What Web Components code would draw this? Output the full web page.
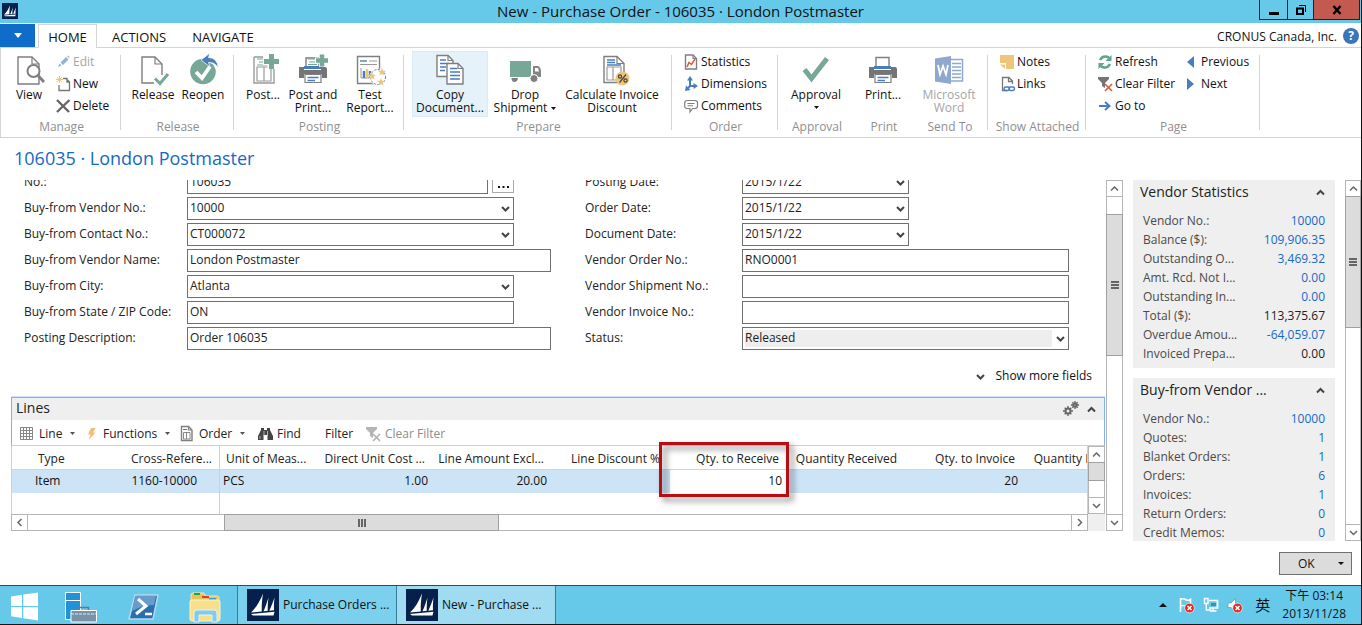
<!DOCTYPE html>
<html lang="en">
<head>
<meta charset="utf-8">
<title>New - Purchase Order - 106035 · London Postmaster</title>
<style>
html, body { margin: 0; height: 100%; }
body { font: 12px/16px "Open Sans", "Noto Sans", "Noto Sans CJK TC", sans-serif; color: #222; background: #fff; overflow: hidden; }
</style>
</head>
<body>
<purchase-order-app></purchase-order-app>
<script>
const BASE = `
  *, *::before, *::after { box-sizing: border-box; }
  button, input, select { font: inherit; color: inherit; margin: 0; padding: 0; border: 0; background: none; border-radius: 0; }
  button { display: block; cursor: default; }
  svg { display: block; }
`;
function define(name, render) {
  customElements.define(name, class extends HTMLElement {
    connectedCallback() {
      if (this.shadowRoot) return;
      const t = document.createElement('template');
      t.innerHTML = render(this);
      this.attachShadow({ mode: 'open' }).append(t.content.cloneNode(true));
      const s = document.createElement('style');
      s.textContent = BASE;
      this.shadowRoot.prepend(s);
    }
  });
}
const G = '#7f7f7f', GR = '#76a797', BL = '#4a7ebb', YE = '#efc57b', RD = '#d95b3b';
const page = (x, y, w, h, f) => `<path d="M${x} ${y}H${x + w - f}L${x + w} ${y + f}V${y + h}H${x}Z" fill="#fff" stroke="${G}" stroke-width="1.4"/><path d="M${x + w - f} ${y}V${y + f}H${x + w}" fill="none" stroke="${G}" stroke-width="1.2"/>`;
const printer = `<path d="M9 12V3.500H22V12" fill="#fff" stroke="${G}" stroke-width="1.400"/><path d="M7 12H24V15H7Z" fill="${BL}"/><path d="M2 13H7V16H24V13H28Q30 13 30 15V24H25V20H7V24H2Z" fill="#757575"/><path d="M8 20.500H24V28.500H8Z" fill="#fff" stroke="${G}" stroke-width="1.200"/><path d="M10.500 23.500H21.500M10.500 26.500H18" stroke="${BL}" stroke-width="1.300"/>`;
const badge = (x, y) => `<circle cx="${x}" cy="${y}" r="4.800" fill="#e02b20" stroke="#fff" stroke-width=".6"/><path d="M${x - 2} ${y - 2}l4 4m0 -4l-4 4" stroke="#fff" stroke-width="1.500"/>`;
const star = (x, y) => `<path transform="translate(${x} ${y})" d="M0 -4L1.200 -1.300L4 -1.200L1.800 .7L2.600 3.500L0 1.900L-2.600 3.500L-1.800 .7L-4 -1.200L-1.200 -1.300Z" fill="${YE}"/>`;
const cog = (x, y, r) => `<g transform="translate(${x} ${y})" fill="none" stroke="#666"><circle r="${r}" stroke-width="2"/><path d="M${r} 0h2.500M-${r} 0h-2.500M0 ${r}v2.500M0 -${r}v-2.500M${r * .7} ${r * .7}l1.600 1.600M-${r * .7} ${r * .7}l-1.600 1.600M${r * .7} -${r * .7}l1.600 -1.600M-${r * .7} -${r * .7}l-1.600 -1.600" stroke-width="1.400"/></g>`;
const sails = '<rect width="32" height="32" fill="#05204b"/><path d="M4 23.500C9 19 13 12 16 4.500C15 11 14.500 17 14.800 22.500ZM16.500 22.300C18.500 18 20 13 21.500 8.500C20.800 13 20.600 18 20.800 21.800ZM22.300 21.700C24.500 17 26 13 27.500 8.500C27 13 26.800 17 27 21.300ZM4 25L27.500 22.800L26.500 26.500H6Z" fill="#fff"/>';
const bigIcons = {
  view: page(5, 3, 21, 27, 7) + `<circle cx="20.500" cy="17" r="6" fill="#fff" stroke="${G}" stroke-width="2"/><path d="M25 21.500L31 28" stroke="${G}" stroke-width="2.800"/>`,
  release: page(5, 3, 20, 26, 7) + `<path d="M17 21H31V30H17Z" fill="#fff"/><path d="M18 24.500L23 29.500L31 20" fill="none" stroke="${GR}" stroke-width="3"/>`,
  reopen: `<circle cx="16" cy="17.500" r="12.800" fill="${GR}"/><path d="M9 18L15 24L23 12.500" fill="none" stroke="#fff" stroke-width="3.800"/><path d="M31 14Q29 5 20 5.500" fill="none" stroke="#fff" stroke-width="6"/><path d="M14 6L23 -1L21.500 3.500Q31 4 31 14Q28 8 21.500 8.500L23 13Z" fill="${BL}" stroke="#fff" stroke-width=".7"/>`,
  post: `<path d="M7 3H16M27 15V29H7V3" fill="none" stroke="#999" stroke-width="1.400"/><path d="M10 5h9M12 8h7M10 11h10" stroke="${GR}" stroke-width="1.200"/><path d="M10 13H24V27H10ZM17 13V27" fill="none" stroke="#999" stroke-width="1.200"/><path d="M16 7.500H32M24 0V15" stroke="#fff" stroke-width="7"/><path d="M17 7.500H32M24.500 0V15" stroke="${GR}" stroke-width="5"/>`,
  postprint: printer.replace('V3.500', 'V4') + `<path d="M11 5h8M12 8h6M11 10.500h9" stroke="${GR}"/><path d="M18 6.500H31M25 0V13" stroke="#fff" stroke-width="6"/><path d="M19 6.500H31M25 .5V12.500" stroke="${GR}" stroke-width="4.500"/>`,
  test: `<path d="M3.500 2.500H25.500V29.500H3.500Z" fill="#fff" stroke="${G}" stroke-width="1.400"/><path d="M6 7H13" stroke="${BL}" stroke-width="1.400"/><path d="M6 10.500H23M15 7H23" stroke="#999"/><path d="M7 14V24H24" fill="none" stroke="#999"/><path d="M10 17V24M16 17V24" stroke="${BL}" stroke-width="2.500"/><path d="M13 15V24" stroke="${YE}" stroke-width="2.500"/><circle cx="24" cy="23" r="8.500" fill="#fff"/><circle cx="24" cy="23" r="7.500" fill="none" stroke="${BL}" stroke-dasharray="2 1.500"/>${star(18, 22)}${star(28, 18)}${star(27, 28)}`,
  copy: page(3, 1.500, 16, 21, 5) + `<path d="M6 6h6M6 9.500h9M6 13h6M6 16.500h5" stroke="${BL}" stroke-width="1.300"/>` + page(13, 9.500, 16, 20.500, 5) + `<path d="M16 14.500h7M16 18h10M16 21.500h10M16 25h10" stroke="${BL}" stroke-width="1.300"/>`,
  truck: `<path d="M1 7H22V23H1Z" fill="${GR}"/><path d="M24 12H29Q32 13 32 18V23H24Z" fill="#858585"/><path d="M26 14H29L30 17.500H26Z" fill="#fff"/><path d="M2.500 24H9Q8.500 28 5.500 28T2.500 24Z" fill="${G}"/><circle cx="25" cy="24.500" r="4" fill="${G}" stroke="#fff"/>`,
  invoice: '<g transform="translate(3 0)">' + page(5, 2.500, 20, 26, 7) + `<path d="M8 6h8M8 8.500h8M8 11h14" stroke="${BL}" stroke-width="1.300"/><path d="M8 13H22V26H8ZM14 13V26" fill="none" stroke="#999" stroke-width="1.200"/><circle cx="23.500" cy="24.500" r="7" fill="${YE}"/><path d="M27 20.500L20.500 28.500" stroke="#444" stroke-width="1.200"/><g fill="none" stroke="#444" stroke-width="1.200"><circle cx="21" cy="22.500" r="1.600"/><circle cx="26.500" cy="26.500" r="1.600"/></g></g>`,
  check: `<path d="M4.500 15.500L11.500 24.500L27 4.500" fill="none" stroke="${GR}" stroke-width="5"/>`,
  printer,
  word: `<path d="M17 5.500H29.500V27H17Z" fill="#fff" stroke="#8fa8d0" stroke-width="1.500"/><path d="M19 9.500H28M19 13H28M19 16.500H28M19 20H28M19 23.500H28" stroke="#8fa8d0" stroke-width="1.500"/><path d="M2 4.500L18 2V30L2 27.500Z" fill="#8fa8d0"/><path d="M5 11L7 20.500L10 12L13 20.500L15 11" fill="none" stroke="#fff" stroke-width="1.800"/>`,
  sails,
  start: '<path d="M0 5.500L11 3.700V15H0ZM12.300 3.500L27 1.500V15H12.300ZM0 16.300H11V27L0 25.300ZM12.300 16.300H27V29.500L12.300 27.300Z" fill="#fff" transform="translate(8 0)"/>',
  server: '<path d="M.5 1.500H15.500V28.500H.5Z" fill="#2191d9" stroke="#fff"/><path d="M.5 9.500H15.500" stroke="#fff"/><path d="M6 19.500H31.500V31H6Z" fill="#7992a8" stroke="#fff"/><path d="M14 19V16.500H23.500V19" fill="none" stroke="#617b92" stroke-width="1.500"/><path d="M6 23H31" stroke="#dbe8f0" stroke-dasharray="3 1"/>',
  shell: '<path d="M8 4H31L26 28H2Z" fill="#2b6fae" stroke="#b9d9ee" stroke-width="1.500" stroke-linejoin="round"/><path d="M8 5H29L27 14Q16 14 5 20Z" fill="#659ccb"/><path d="M11 8L19 15L9 23" fill="none" stroke="#fff" stroke-width="3"/><path d="M18 23H25" stroke="#fff" stroke-width="2.500"/>',
  folder: '<path d="M2 4Q2 2 4 2H15L17 5H28Q30 5 30 7V28H2Z" fill="#e5c25e" stroke="#fbe9a8"/><path d="M5 3h6" stroke="#29a329" stroke-width="2"/><path d="M13 6h7" stroke="#d6402c" stroke-width="2"/><path d="M20 8h7" stroke="#3a9fe0" stroke-width="2"/><path d="M1 11Q1 9 3 9H29Q31 9 31 11V28Q31 30 29 30H3Q1 30 1 28Z" fill="#f8df8c" stroke="#fff3c4"/><path d="M5 31V22Q5 19 8 19H25Q28 19 28 22V31H23V24H10V31Z" fill="#83cbe9" stroke="#dff4fc"/>'
};
const smallIcons = {
  edit: '<path d="M2 13L3.500 9.500L5.500 11.500ZM4.500 8.500L10 3L12.500 5.500L7 11Z" fill="#8fb3d9"/><path d="M10.800 2L12 1.500L13.500 3L13 4.500Z" fill="#b8b8b8"/>',
  new: `<path d="M8 2.500H12V6H14.500V14.500H4V9M10.500 2L14.500 6" fill="none" stroke="#777" stroke-width="1.300" transform="translate(-1 0)"/><path d="M3.500 0V7M0 3.500H7M1 1L6 6M6 1L1 6" stroke="${YE}"/>`,
  delete: '<path d="M1 2L13 14M13.500 2L1 14" stroke="#666" stroke-width="2.400"/>',
  stats: page(1.500, 1, 11, 14, 3.500) + `<path d="M3 13L5 8.500L7.500 10.500L11 5" fill="none" stroke="${RD}" stroke-width="1.500"/>`,
  dims: `<path d="M6 2V10L12 10M6 10L3 13" fill="none" stroke="${BL}" stroke-width="2"/><path d="M6 0L9 4.500H3ZM14 10L9.500 7V13ZM1 15L2 9.500L6.500 14Z" fill="${BL}"/>`,
  comments: `<path d="M3 2.500H11Q13.500 2.500 13.500 5V8Q13.500 10.500 11 10.500H8.500L6 14V10.500H3Q.7 10.500 .7 8V5Q.7 2.500 3 2.500Z" fill="#fff" stroke="${G}" stroke-width="1.200"/><path d="M3.500 5.500H10.500M3.500 7.800H9" stroke="${G}"/>`,
  notes: `<path d="M0 1H14V15H6V9H0Z" fill="${YE}"/><path d="M0 10.500H5V15Z" fill="${YE}"/>`,
  links: `<path d="M7 14.500H2.500V1.500H9L12.500 5V8M8.500 2V5.500H12" fill="none" stroke="#777" stroke-width="1.300"/><g fill="none" stroke="${BL}" stroke-width="1.500"><rect x="4" y="11" width="5.500" height="3.500" rx="1.700"/><rect x="9" y="11" width="5.500" height="3.500" rx="1.700"/></g>`,
  refresh: `<path d="M2 6Q4 2 8 2.500L11 3.500M12 10Q10 14 6 13.500L3 12.500" fill="none" stroke="#5fa48c" stroke-width="2.600"/><path d="M13.500 1V7H7.500ZM.5 15V9H6.500Z" fill="#5fa48c"/>`,
  clear: `<path d="M0 1H11V3L7 7V12L4 10V7L0 3Z" fill="#757575"/><path d="M7 8L14 15M14 8L7 15" stroke="${RD}" stroke-width="1.600"/>`,
  cleargray: '<path d="M0 1H11V3L7 7V12L4 10V7L0 3Z" fill="#b5b5b5"/><path d="M7 8L14 15M14 8L7 15" stroke="#b0b0b0" stroke-width="1.500"/>',
  goto: `<path d="M1 8H11M7 4L11.500 8L7 12" fill="none" stroke="${BL}" stroke-width="2"/>`,
  prev: `<path d="M10 2V14L3 8Z" fill="${BL}"/>`,
  next: `<path d="M3 2V14L10 8Z" fill="${BL}"/>`,
  grid: '<path d="M.5 1.500H12.500V13.500H.5ZM.5 4.500H12.500M.5 7.500H12.500M.5 10.500H12.500M3.500 1.500V13.500M6.500 1.500V13.500M9.500 1.500V13.500" fill="none" stroke="#888"/>',
  bolt: '<path d="M7 2H11.500L9 6.500H11.500L4.500 14L6.500 8.500H4Z" fill="#f0be6e"/>',
  order: page(1.500, .5, 10.500, 14, 3.500) + `<path d="M3 3.500H7" stroke="${BL}"/><path d="M3.500 6.500H10V13H3.500ZM6.500 6.500V13" fill="none" stroke="#888"/>`,
  find: '<path d="M3 2H6V4H9V2H12V4L15 10V14H9.500V9H5.500V14H0V10L3 4Z" fill="#444"/><path d="M6 5V10M9.500 5V10M2 10V13" stroke="#ccc" stroke-width=".8"/>',
  cogs: cog(5, 10, 2.500) + cog(12, 4, 1.600),
  flag: '<path d="M1.500 1V15M1.500 2.500Q4 1 6.500 2.500T11.500 2.500V9Q9 10 6.500 9T1.500 9" fill="#66c9ea" stroke="#fff" stroke-width="1.600"/>' + badge(10.500, 11),
  net: '<path d="M6 3.500H14.500V11H6M10 11V13.500M7 14H13.500" fill="none" stroke="#fff" stroke-width="1.700"/><path d="M1.500 1.500H5V6.500H1.500ZM3.300 6.500V13H8" fill="none" stroke="#fff" stroke-width="1.400"/><path d="M8 6H13V9H8Z" fill="#3f8fae"/>',
  sound: '<path d="M1 6H4L8.500 1.500V14.500L4 10.500H1Z" fill="#fff" stroke="#4a8ea8" stroke-width=".6"/>' + badge(10.500, 11)
};
define('ui-icon', el => {
  const n = el.getAttribute('name'), big = n in bigIcons, w = el.getAttribute('size') || (big ? 32 : 16);
  return `<style>:host{display:block;flex:none}</style><svg width="${w}" height="${w}" viewBox="0 0 ${big ? '32 32' : '16 16'}" style="overflow:visible" aria-hidden="true">${bigIcons[n] || smallIcons[n]}</svg>`;
});
define('ui-chevron', el => {
  const d = { down: 'M1 3L4.500 6.500L8 3', up: 'M1 6.500L4.500 3L8 6.500', left: 'M6.500 1L3 4.500L6.500 8', right: 'M3 1L6.500 4.500L3 8' }[el.getAttribute('dir')];
  return `<style>:host{display:block;flex:none}</style><svg width="9" height="9" fill="none" stroke="${el.getAttribute('ink') || '#444'}" stroke-width="${el.getAttribute('weight') || 2}" aria-hidden="true"><path d="${d}"/></svg>`;
});

define('title-bar', () => `<style>
  :host{display:grid;grid-template-columns:1fr auto 1fr;height:23px;background:#66c9ea;color:#111}
  h1{margin:0;font-size:15px;line-height:22px;font-weight:400}
  ui-icon{margin:3px 0 0 2px}
  .win{display:flex;justify-content:flex-end;height:20px;padding-right:1px}
  button{border:1px solid #222;border-top:0;border-left-width:1px;border-right:0;width:28px;display:grid;place-items:center}
  .r{width:26px}.x{width:47px;background:#c35a50;border-right:1px solid #222}
</style><ui-icon name="sails" size="16"></ui-icon><h1>New - Purchase Order - 106035 · London Postmaster</h1>
<div class="win"><button aria-label="Minimize"><svg width="10" height="10"><path d="M0 8.500H10" stroke="#000" stroke-width="3"/></svg></button>
<button class="r" aria-label="Restore"><svg width="10" height="10" fill="none" stroke="#000"><path d="M1 3.500H7V9H1Z" stroke-width="2"/><path d="M3 .5H9.500V7"/></svg></button>
<button class="x" aria-label="Close"><svg width="10" height="10"><path d="M1.500 1L8.500 9M8.500 1L1.500 9" stroke="#000" stroke-width="2.400"/></svg></button></div>`);

define('tab-strip', () => `<style>
  :host{display:flex;height:25px;padding-top:1px;border-bottom:1px solid #d4d4d4;color:#111}
  .menu{width:35px;background:#0f6cc8;display:grid;place-items:center;height:23px}
  .tab{height:24px;margin-right:15px;line-height:26px;font-size:13px}
  .on{width:59px;margin:0 15px 0 3px;border:1px solid #d4d4d4;border-bottom:0;background:#fff;line-height:24px;text-align:center}
  .act{margin-right:26px}
  .who{margin-left:auto;line-height:26px;padding-right:6px}
  .help{width:16px;height:16px;border-radius:8px;background:#3a76b8;color:#fff;font-weight:700;line-height:16px;margin:4px 2px 0 0}
</style><button class="menu" aria-label="Application menu"><svg width="8" height="5"><path d="M0 0H8L4 5Z" fill="#fff"/></svg></button>
<button class="tab on">HOME</button><button class="tab act">ACTIONS</button><button class="tab">NAVIGATE</button>
<span class="who">CRONUS Canada, Inc.</span><button class="help" aria-label="Help">?</button>`);

define('ribbon-button', el => `<style>
  :host{display:block;width:${el.getAttribute('width')}px;flex:none;color:#111}
  :host([disabled]){color:#a5a5a5}
  button{width:100%;height:66px;padding-top:3px;display:flex;flex-direction:column;align-items:center;white-space:nowrap;line-height:13px;border:0}
  :host([hot]) button{background:#e5f2fa;outline:1px solid #d9ebf6;outline-offset:-1px}
  .t{margin-top:2px;text-align:center}
  svg{display:inline-block;margin-left:4px;vertical-align:2px}.solo{display:block;margin:5px auto 0}
</style><button ${el.hasAttribute('disabled') ? 'disabled' : ''}><ui-icon name="${el.getAttribute('icon')}"></ui-icon><span class="t"><slot></slot>${el.hasAttribute('menu') ? `<svg class="${el.getAttribute('menu')}" width="5" height="3"><path d="M0 0H5L2.500 3Z" fill="#111"/></svg>` : ''}</span></button>`);

define('ribbon-item', el => `<style>
  :host{display:block;color:#111}:host([disabled]){color:#a5a5a5}
  button{display:flex;align-items:center;gap:1px;height:22px;white-space:nowrap;line-height:22px}
</style><button ${el.hasAttribute('disabled') ? 'disabled' : ''}><ui-icon name="${el.getAttribute('icon')}"></ui-icon><slot></slot></button>`);

define('ribbon-group', el => `<style>
  :host{display:flex;width:${el.getAttribute('width')}px;flex:none}
  section{flex:1;display:flex;flex-direction:column}
  .c{display:flex;padding:3px 0 0 ${el.getAttribute('pad') || 0}px;height:70px}
  .l{color:#8f8f8f;text-align:center;line-height:18px;padding-left:2px}
  i{width:1px;background:#d4d4d4;margin:7px 0}
</style><section><div class="c"><slot></slot></div><div class="l">${el.getAttribute('label')}</div></section><i></i>`);

define('ribbon-bar', () => `<style>
  :host{display:flex;height:90px;border-left:1px solid #d4d4d4;border-bottom:1px solid #d4d4d4}
  .col{display:flex;flex-direction:column}
  .wide{width:86px}
</style>
<ribbon-group label="Manage" width="120" pad="1"><ribbon-button icon="view" width="54">View</ribbon-button><div class="col"><ribbon-item icon="edit" disabled>Edit</ribbon-item><ribbon-item icon="new">New</ribbon-item><ribbon-item icon="delete">Delete</ribbon-item></div></ribbon-group>
<ribbon-group label="Release" width="113" pad="7"><ribbon-button icon="release" width="50">Release</ribbon-button><ribbon-button icon="reopen" width="50">Reopen</ribbon-button></ribbon-group>
<ribbon-group label="Posting" width="170" pad="4"><ribbon-button icon="post" width="50">Post...</ribbon-button><ribbon-button icon="postprint" width="50">Post and<br>Print...</ribbon-button><ribbon-button icon="test" width="64">Test<br>Report...</ribbon-button></ribbon-group>
<ribbon-group label="Prepare" width="268" pad="8"><ribbon-button icon="copy" width="76" hot>Copy<br>Document...</ribbon-button><ribbon-button icon="truck" width="74" menu="inline">Drop<br>Shipment</ribbon-button><ribbon-button icon="invoice" width="100">Calculate Invoice<br>Discount</ribbon-button></ribbon-group>
<ribbon-group label="Order" width="106" pad="12"><div class="col"><ribbon-item icon="stats">Statistics</ribbon-item><ribbon-item icon="dims">Dimensions</ribbon-item><ribbon-item icon="comments">Comments</ribbon-item></div></ribbon-group>
<ribbon-group label="Approval" width="75"><ribbon-button icon="check" width="76" menu="solo">Approval</ribbon-button></ribbon-group>
<ribbon-group label="Print" width="58"><ribbon-button icon="printer" width="60">Print...</ribbon-button></ribbon-group>
<ribbon-group label="Send To" width="77"><ribbon-button icon="word" width="76" disabled>Microsoft<br>Word</ribbon-button></ribbon-group>
<ribbon-group label="Show Attached" width="98" pad="12"><div class="col"><ribbon-item icon="notes">Notes</ribbon-item><ribbon-item icon="links">Links</ribbon-item></div></ribbon-group>
<ribbon-group label="Page" width="174" pad="12"><div class="col wide"><ribbon-item icon="refresh">Refresh</ribbon-item><ribbon-item icon="clear">Clear Filter</ribbon-item><ribbon-item icon="goto">Go to</ribbon-item></div><div class="col"><ribbon-item icon="prev">Previous</ribbon-item><ribbon-item icon="next">Next</ribbon-item></div></ribbon-group>`);

define('scroll-bar', el => {
  const h = el.hasAttribute('horizontal'), [a, b, c] = el.getAttribute('parts').split(' ');
  return `<style>
  :host{display:flex;flex-direction:${h ? 'row' : 'column'};${h ? 'height' : 'width'}:17px;flex:none;border:1px solid #b5b5b5;background:#fff}
  button{flex:none;${h ? 'width' : 'height'}:16px;display:grid;place-items:center}
  .s{border-${h ? 'right' : 'bottom'}:1px solid #b5b5b5}.e{border-${h ? 'left' : 'top'}:1px solid #b5b5b5}
  .a{flex:${a} 0 0}.c{flex:${c} 0 0}
  .b{flex:${b} 0 0;background:#dcdcdc;outline:1px solid #a0a0a0;display:grid;place-items:center}
  </style><button class="s" aria-label="Scroll back"><ui-chevron dir="${h ? 'left' : 'up'}" weight="1.500" ink="#666"></ui-chevron></button>
  <div class="a"></div><div class="b">${el.hasAttribute('plain') ? '' : `<svg width="8" height="8"><path d="${h ? 'M1 0V8M4 0V8M7 0V8' : 'M0 1H8M0 4H8M0 7H8'}" stroke="#666" stroke-width="2"/></svg>`}</div><div class="c"></div>
  <button class="e" aria-label="Scroll forward"><ui-chevron dir="${h ? 'right' : 'down'}" weight="1.500" ink="#666"></ui-chevron></button>`;
});

define('form-field', el => {
  const k = el.getAttribute('kind') || 'text', v = el.getAttribute('value') || '';
  const control = k === 'select'
    ? `<div class="box"><select id="f"><option>${v}</option></select><ui-chevron dir="down"></ui-chevron></div>`
    : `<div class="box"><input id="f" value="${v}"></div>`;
  return `<style>
  :host{display:flex;height:26px;--inset:0px}
  label{flex:none;width:var(--label);line-height:22px;white-space:nowrap}
  .box{flex:1;height:23px;border:1px solid #707070;position:relative;background:#fff;margin-right:var(--inset)}
  input,select{display:block;width:100%;height:21px;line-height:20px;padding:0 0 1px 2px;appearance:none;outline:none}
  input{padding-bottom:3px}
  ui-chevron{position:absolute;right:3px;top:6px}
  :host([short]){--inset:37px}
  :host([date]) .box{flex:none;width:167px}
  :host([lookup]) .box{margin-right:4px}
  :host([readonly]) select{background:#eee;width:calc(100% - 18px);height:17px;margin:2px;padding:0 0 1px 0;line-height:16px}
  .more{width:22px;height:22px;border:1px solid #aaa;margin-right:37px;padding-top:10px;display:grid;place-items:center}
  </style><label for="f">${el.getAttribute('label')}</label>${control}${el.hasAttribute('lookup') ? '<button class="more" aria-label="Assist edit"><svg width="11" height="2"><path d="M0 1H2M4.500 1H6.500M9 1H11" stroke="#111" stroke-width="2"/></svg></button>' : ''}`;
});

define('general-form', () => `<style>
  :host{display:block}
  .cols{display:grid;grid-template-columns:527fr 484fr;column-gap:34px;padding:0 37px 0 24px;margin-top:-9px}
  .l{--label:163px}.r{--label:157px}
  .m{display:flex;justify-content:flex-end;padding:12px 14px 10px 0}
  .m button{display:flex;align-items:center;gap:10px;height:22px;color:#111}
</style><div class="cols"><div class="l">
<form-field label="No.:" value="106035" lookup></form-field>
<form-field label="Buy-from Vendor No.:" value="10000" kind="select" short></form-field>
<form-field label="Buy-from Contact No.:" value="CT000072" kind="select" short></form-field>
<form-field label="Buy-from Vendor Name:" value="London Postmaster"></form-field>
<form-field label="Buy-from City:" value="Atlanta" kind="select" short></form-field>
<form-field label="Buy-from State / ZIP Code:" value="ON" short></form-field>
<form-field label="Posting Description:" value="Order 106035"></form-field></div>
<div class="r">
<form-field label="Posting Date:" value="2015/1/22" kind="select" date></form-field>
<form-field label="Order Date:" value="2015/1/22" kind="select" date></form-field>
<form-field label="Document Date:" value="2015/1/22" kind="select" date></form-field>
<form-field label="Vendor Order No.:" value="RNO0001"></form-field>
<form-field label="Vendor Shipment No.:"></form-field>
<form-field label="Vendor Invoice No.:"></form-field>
<form-field label="Status:" value="Released" kind="select" readonly></form-field></div></div>
<div class="m"><button><ui-chevron dir="down"></ui-chevron>Show more fields</button></div>`);

define('tool-button', el => `<style>
  :host{display:block;flex:none;width:${el.getAttribute('width')}px}:host([disabled]){color:#8c8c8c}
  button{display:flex;align-items:center;height:25px;padding-top:2px;line-height:22px;white-space:nowrap;gap:3px}
  .d{margin-left:5px}
</style><button ${el.hasAttribute('disabled') ? 'disabled' : ''}>${el.hasAttribute('icon') ? `<ui-icon name="${el.getAttribute('icon')}"></ui-icon>` : ''}<slot></slot>${el.hasAttribute('menu') ? '<svg class="d" width="5" height="3"><path d="M0 0H5L2.500 3Z" fill="#555"/></svg>' : ''}</button>`);

define('lines-grid', () => `<style>
  :host{display:flex;flex-direction:column;flex:1;min-height:0;border-left:1px solid #d0d0d0}
  .top{display:flex;flex:1;min-height:0}
  .view{flex:1;min-width:0;overflow:hidden;display:flex;flex-direction:column;border-right:1px solid #d0d0d0}
  table{table-layout:fixed;width:1130px;border-collapse:separate;border-spacing:0}
  th,td{font-weight:400;padding:0 7px;text-align:right;white-space:nowrap;overflow:hidden;vertical-align:top}
  th{height:24px;border-bottom:1px solid #d4d4d4;padding:3px 10px 0 3px;line-height:20px}
  td{height:23px;background:#cce4f6;color:#111;line-height:21px}
  th.s,td.s{text-align:left}
  th.s{padding-left:26px}td.s{padding-left:23px}
  th.u{padding-left:6px}td.u{padding-left:3px}
  .f{border-right:1px solid #d0d0d0}th.f{padding-right:7px}td.f{padding-right:22px}
  td.e{background:#fff}
  .rest{width:208px;flex:1;border-right:1px solid #d0d0d0}
  .bot{display:flex;background:#efefef;padding-right:17px;margin-left:-1px}
  .bot scroll-bar{flex:1}
</style><div class="top"><div class="view"><table>
<colgroup><col style="width:108px"><col style="width:100px"><col style="width:96px"><col style="width:119px"><col style="width:119px"><col style="width:116px"><col style="width:119px"><col style="width:118px"><col style="width:118px"><col style="width:117px"></colgroup>
<thead><tr><th class="s">Type</th><th class="f">Cross-Refere...</th><th class="s u">Unit of Meas...</th><th>Direct Unit Cost ...</th><th>Line Amount Excl...</th><th>Line Discount %</th><th>Qty. to Receive</th><th>Quantity Received</th><th>Qty. to Invoice</th><th>Quantity Invoiced</th></tr></thead>
<tbody><tr><td class="s">Item</td><td class="f">1160-10000</td><td class="s u">PCS</td><td>1.00</td><td>20.00</td><td></td><td class="e">10</td><td></td><td>20</td><td></td></tr></tbody></table><div class="rest"></div></div>
<scroll-bar parts="0 17 17" plain></scroll-bar></div>
<div class="bot"><scroll-bar horizontal parts="197 273 573"></scroll-bar></div>`);

define('lines-panel', () => `<style>
  :host{display:flex;flex-direction:column;flex:1;min-height:0;margin:0 1px 0 11px;position:relative}
  .head{border:1px solid #7fb0f8;border-bottom:1px solid #d0d0d0;box-shadow:0 -1px 0 #cfe1fb}
  .bar{display:flex;align-items:center;background:#efefef;height:22px;padding:0 8px 0 4px}
  h2{margin:0 auto 2px 0;font-size:14px;line-height:20px;font-weight:400}
  .gear{margin-right:8px}
  .tools{display:flex;height:25px;padding-left:8px}
  .mark{position:absolute;left:648px;top:45px;width:130px;height:55px;border:3px solid #b80d12;filter:drop-shadow(4px 4px 3px rgba(0,0,0,.5));pointer-events:none}
</style><div class="head"><div class="bar"><h2>Lines</h2><button class="gear" aria-label="Customize"><ui-icon name="cogs"></ui-icon></button><button aria-label="Collapse"><ui-chevron dir="up"></ui-chevron></button></div>
<div class="tools"><tool-button icon="grid" width="64" menu>Line</tool-button><tool-button icon="bolt" width="96" menu>Functions</tool-button><tool-button icon="order" width="78" menu>Order</tool-button><tool-button icon="find" width="67">Find</tool-button><tool-button width="41">Filter</tool-button><tool-button icon="cleargray" width="90" disabled>Clear Filter</tool-button></div></div>
<lines-grid></lines-grid><div class="mark"></div>`);

define('fact-box', el => `<style>
  :host{display:block;background:#efefef;padding-bottom:5px;flex:none}
  header{display:flex;justify-content:space-between;align-items:center;height:31px;padding:0 10px 7px 7px}
  h2{margin:0;font-size:14px;line-height:24px;font-weight:400}
  dl{margin:0;padding:0 10px}
  div{display:flex;justify-content:space-between;line-height:19px}
  dt{color:#4a4a4a}dd{margin:0}a{color:#1569c7;text-decoration:none}
</style><header><h2>${el.getAttribute('heading')}</h2><button aria-label="Collapse"><ui-chevron dir="up"></ui-chevron></button></header>
<dl>${el.getAttribute('rows').split(';').map(r => { const [a, b] = r.split('|'); return `<div><dt>${a}</dt><dd>${b[0] === '=' ? b.slice(1) : `<a href="#">${b}</a>`}</dd></div>`; }).join('')}</dl>`);

define('task-button', el => `<style>
  :host{display:block;flex:none;width:159px;border-left:1px solid #357d98;background:#7ad0ed}
  :host([active]){background:#9fdcf2;border-right:1px solid #357d98;width:160px}
  button{display:flex;align-items:center;gap:4px;width:100%;height:100%;padding-left:9px;color:#111;white-space:nowrap}
</style><button><ui-icon name="sails"></ui-icon><slot></slot></button>`);

define('task-bar', () => `<style>
  :host{display:flex;height:40px;background:#66c9ea;border-top:1px solid #444;border-bottom:1px solid #111;color:#111}
  .pin{display:flex;gap:30px;padding:3px 14px 0 3px;width:237px}
  .tray{margin-left:auto;display:flex;align-items:center;padding-right:15px}
  .tray button{margin-right:8px}
  .tray .gap{margin-right:12px}
  time{display:block;text-align:center;line-height:18px}
  .tray .ime{font-size:15px;line-height:20px;margin-right:12px}
</style><div class="pin"><button aria-label="Start"><ui-icon name="start"></ui-icon></button><button aria-label="Server Manager"><ui-icon name="server"></ui-icon></button><button aria-label="PowerShell"><ui-icon name="shell"></ui-icon></button><button aria-label="File Explorer"><ui-icon name="folder"></ui-icon></button></div>
<task-button>Purchase Orders ...</task-button><task-button active>New - Purchase ...</task-button>
<div class="tray"><button class="gap" aria-label="Show hidden icons"><svg width="8" height="4"><path d="M0 4H8L4 0Z" fill="#111"/></svg></button><button aria-label="Action Center"><ui-icon name="flag"></ui-icon></button><button aria-label="Network"><ui-icon name="net"></ui-icon></button><button class="gap" aria-label="Volume"><ui-icon name="sound"></ui-icon></button><button class="ime">英</button><time datetime="2013-11-28T15:14">下午 03:14<br>2013/11/28</time></div>`);

define('purchase-order-app', () => `<style>
  :host{display:flex;flex-direction:column;height:100vh;border-right:1px solid #111}
  h2{margin:0;padding-left:14px;height:42px;line-height:40px;font-size:18px;font-weight:400;color:#1569c7;flex:none}
  main{display:flex;flex:1;min-height:0}
  title-bar,tab-strip,ribbon-bar,footer,task-bar{flex:none}
  .left{display:flex;flex:1;min-width:0;margin-bottom:10px}
  .doc{display:flex;flex-direction:column;flex:1;min-width:0;overflow:hidden}
  general-form{flex:none}
  .facts{display:flex;flex-direction:column;gap:10px;width:202px;margin:0 10px;overflow:hidden}
  .outer{width:16px}
  footer{display:flex;justify-content:flex-end;height:44px;padding:11px 9px 0 0}
  .ok{display:flex;align-items:center;width:73px;height:23px;border:1px solid #707070;background:#dcdcdc;color:#111;padding:0 7px 0 18px;justify-content:space-between}
</style><title-bar></title-bar><tab-strip></tab-strip><ribbon-bar></ribbon-bar>
<h2>106035 · London Postmaster</h2>
<main><div class="left"><div class="doc"><general-form></general-form><lines-panel></lines-panel></div><scroll-bar parts="18 140 160"></scroll-bar></div>
<aside class="facts"><fact-box heading="Vendor Statistics" rows="Vendor No.:|10000;Balance ($):|109,906.35;Outstanding O...|3,469.32;Amt. Rcd. Not I...|0.00;Outstanding In...|0.00;Total ($):|=113,375.67;Overdue Amou...|-64,059.07;Invoiced Prepa...|=0.00"></fact-box>
<fact-box heading="Buy-from Vendor ..." rows="Vendor No.:|10000;Quotes:|1;Blanket Orders:|1;Orders:|6;Invoices:|1;Return Orders:|0;Credit Memos:|0"></fact-box></aside>
<scroll-bar class="outer" parts="0 130 198"></scroll-bar></main>
<footer><button class="ok">OK<svg width="6" height="3"><path d="M0 0H6L3 3Z" fill="#111"/></svg></button></footer>
<task-bar></task-bar>`);
</script>
</body>
</html>
